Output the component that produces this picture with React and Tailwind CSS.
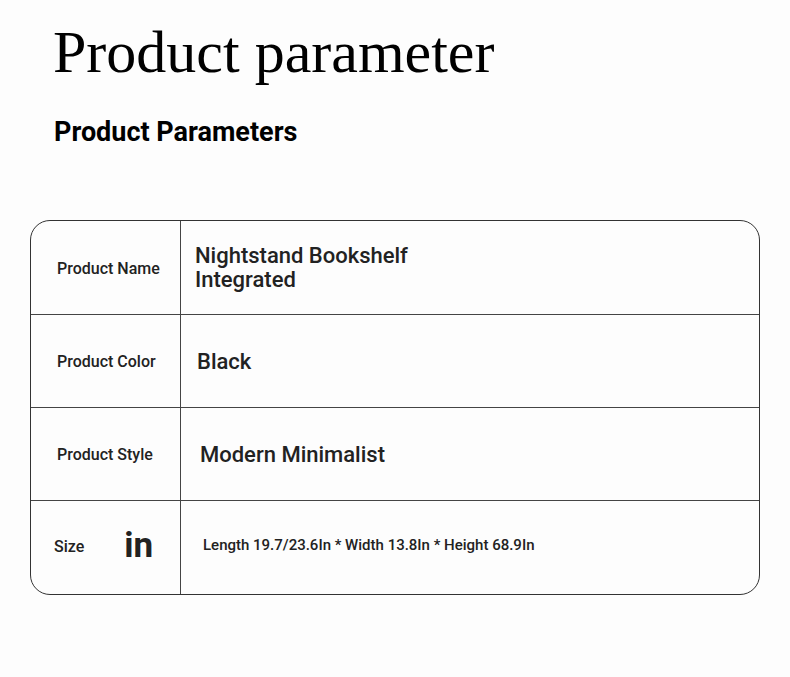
import React from "react";

const rows = [
  { label: "Product Name", value: "Nightstand Bookshelf\nIntegrated", h: "h-[94px]", vcls: "pl-[14px] pt-[1px] text-[22px] leading-[24px]" },
  { label: "Product Color", value: "Black", h: "h-[93px]", vcls: "pl-[16px] text-[22px]" },
  { label: "Product Style", value: "Modern Minimalist", h: "h-[93px]", vcls: "pl-[19px] text-[22px]" },
];

export default function App() {
  return (
    <div className="w-[790px] h-[677px] bg-[#fdfdfd] text-[#222] font-['Roboto',sans-serif] overflow-hidden">
      <h1 className="pl-[53px] pt-[17px] text-[60px] leading-[70px] text-black font-['Liberation_Serif',serif]">
        Product parameter
      </h1>
      <h2 className="pl-[54px] mt-[29px] text-[27px] leading-[32px] font-bold text-black">
        Product Parameters
      </h2>

      <div className="mx-[30px] mt-[72px] border border-[#333] rounded-[20px] overflow-hidden">
        {rows.map((r) => (
          <div key={r.label} className={`flex ${r.h} border-b border-[#444]`}>
            <div className="w-[150px] shrink-0 border-r border-[#444] flex items-center pl-[26px] pt-[2px] text-[16px] font-medium">
              {r.label}
            </div>
            <div className={`flex items-center whitespace-pre-line font-medium ${r.vcls}`}>{r.value}</div>
          </div>
        ))}
        <div className="flex h-[93px]">
          <div className="w-[150px] shrink-0 border-r border-[#444] flex items-center pl-[23px] pb-[4px]">
            <span className="text-[16px] font-medium mt-[3px]">Size</span>
            <span className="ml-[40px] text-[35px] font-bold leading-none">in</span>
          </div>
          <div className="flex items-center pl-[22px] pb-[4px] text-[15px] font-medium">
            Length 19.7/23.6In * Width 13.8In * Height 68.9In
          </div>
        </div>
      </div>
    </div>
  );
}
